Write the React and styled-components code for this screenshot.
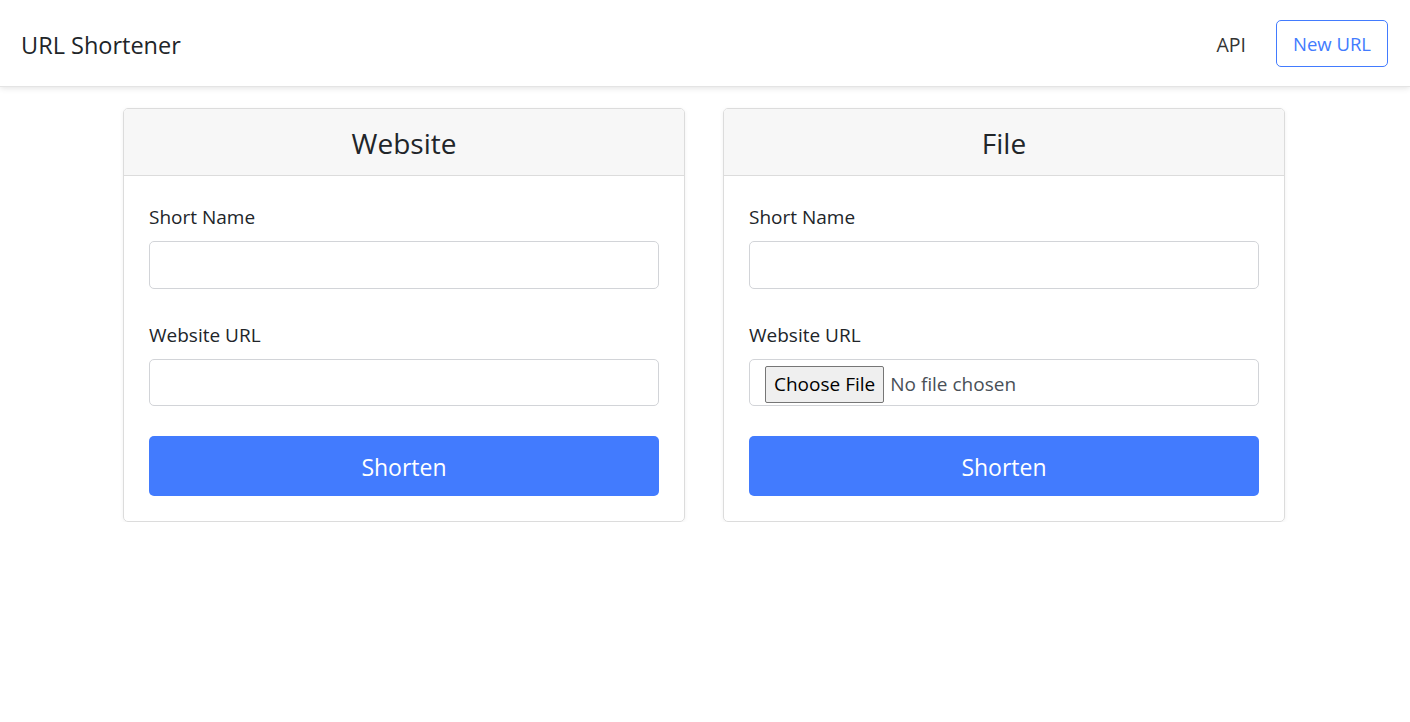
import React from "react";
import styled, { createGlobalStyle } from "styled-components";

const GlobalStyle = createGlobalStyle`
  * { box-sizing: border-box; }
  body {
    margin: 0;
    background: #fff;
    font-family: "Open Sans", "Noto Sans", sans-serif;
    color: #212529;
  }
`;

const Navbar = styled.nav`
  height: 87px;
  display: flex;
  align-items: center;
  justify-content: space-between;
  padding: 0 22px 0 21px;
  background: #fff;
  box-shadow: 0 1px 6px rgba(0, 0, 0, 0.12);
  border-bottom: 1px solid #e4e4e4;
`;

const Brand = styled.a`
  font-size: 23.5px;
  color: #212529;
  text-decoration: none;
  padding-top: 3px;
`;

const NavRight = styled.div`
  display: flex;
  align-items: center;
  gap: 30px;
`;

const NavLink = styled.a`
  font-size: 19.5px;
  color: #333;
  text-decoration: none;
  padding-top: 2px;
`;

const OutlineButton = styled.button`
  height: 47px;
  width: 112px;
  font-family: inherit;
  font-size: 18.5px;
  color: #427bfe;
  background: #fff;
  border: 1px solid #427bfe;
  border-radius: 5px;
  padding-top: 2px;
`;

const Main = styled.main`
  display: flex;
  justify-content: center;
  gap: 38px;
  padding: 21px 2px 0 0;
`;

const Card = styled.section`
  width: 562px;
  border: 1px solid #dcdcdc;
  border-radius: 5px;
  box-shadow: 0 1px 4px rgba(0, 0, 0, 0.06);
  overflow: hidden;
`;

const CardHeader = styled.header`
  height: 67px;
  display: flex;
  align-items: center;
  justify-content: center;
  background: #f7f7f7;
  border-bottom: 1px solid #dcdcdc;
  font-size: 28px;
  padding-top: 2px;
`;

const CardBody = styled.div`
  padding: 25px;
  display: flex;
  flex-direction: column;
`;

const Field = styled.div`
  display: flex;
  flex-direction: column;
  margin-bottom: 30px;
`;

const Label = styled.label`
  font-size: 19px;
  line-height: 30px;
  margin-bottom: 10px;
  padding-top: 1px;
  height: 30px;
`;

const Input = styled.input`
  height: 47.5px;
  border: 1px solid #d2d4d8;
  border-radius: 5px;
  font-family: inherit;
  font-size: 18px;
  padding: 0 15px;
`;

const FileBox = styled.div`
  height: 47.5px;
  border: 1px solid #d2d4d8;
  border-radius: 5px;
  display: flex;
  align-items: center;
  padding: 4px 0 0 15px;
  gap: 6px;
`;

const FileButton = styled.span`
  height: 37px;
  padding: 0 8px;
  display: flex;
  align-items: center;
  background: #efefef;
  border: 1px solid #767676;
  border-radius: 2px;
  font-size: 19px;
  color: #000;
`;

const FileText = styled.span`
  font-size: 19px;
  color: #495057;
`;

const PrimaryButton = styled.button`
  height: 60px;
  border: none;
  border-radius: 5px;
  background: #427bfe;
  color: #fff;
  font-family: inherit;
  font-size: 23px;
  padding-top: 2px;
`;

const WebsiteCard = () => (
  <Card>
    <CardHeader>Website</CardHeader>
    <CardBody>
      <Field>
        <Label>Short Name</Label>
        <Input type="text" />
      </Field>
      <Field>
        <Label>Website URL</Label>
        <Input type="text" />
      </Field>
      <PrimaryButton>Shorten</PrimaryButton>
    </CardBody>
  </Card>
);

const FileCard = () => (
  <Card>
    <CardHeader>File</CardHeader>
    <CardBody>
      <Field>
        <Label>Short Name</Label>
        <Input type="text" />
      </Field>
      <Field>
        <Label>Website URL</Label>
        <FileBox>
          <FileButton>Choose File</FileButton>
          <FileText>No file chosen</FileText>
        </FileBox>
      </Field>
      <PrimaryButton>Shorten</PrimaryButton>
    </CardBody>
  </Card>
);

export default function App() {
  return (
    <>
      <GlobalStyle />
      <Navbar>
        <Brand href="#">URL Shortener</Brand>
        <NavRight>
          <NavLink href="#">API</NavLink>
          <OutlineButton>New URL</OutlineButton>
        </NavRight>
      </Navbar>
      <Main>
        <WebsiteCard />
        <FileCard />
      </Main>
    </>
  );
}
